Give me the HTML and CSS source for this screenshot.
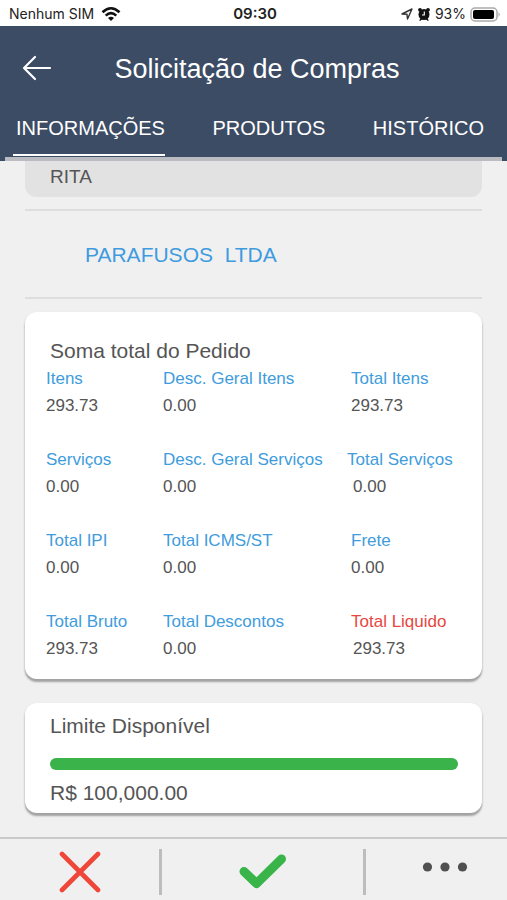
FILE: index.html
```html
<!DOCTYPE html>
<html lang="pt-BR">
<head>
<meta charset="utf-8">
<meta name="viewport" content="width=device-width, initial-scale=1">
<title>Solicitação de Compras</title>
<link rel="stylesheet" href="styles.css">
</head>
<body>
<div class="status">
  <div class="status-side">
    <span>Nenhum SIM</span>
    <svg width="20" height="16" viewBox="0 0 20 16" aria-hidden="true"><g fill="none" stroke="#111" stroke-width="2.6"><path d="M1.5 6.3Q10 -1.8 18.500 6.300"/><path d="M4.700 9.600Q10 4.600 15.300 9.600"/></g><path d="M7 12Q10 9.500 13 12L10 15Z" fill="#111"/></svg>
  </div>
  <strong class="clock">09:30</strong>
  <div class="status-side status-end">
    <svg width="12" height="12" viewBox="0 0 12 12" aria-hidden="true"><path d="M1 6 11 1 6.500 11 6 6.300Z" fill="none" stroke="#333" stroke-width="1.400" stroke-linejoin="round"/></svg>
    <svg width="14" height="14" viewBox="0 0 14 14" aria-hidden="true"><g fill="#111"><circle cx="7" cy="7.500" r="5.500"/><circle cx="3" cy="2.800" r="1.900"/><circle cx="11" cy="2.800" r="1.900"/><path d="M2 13.500 4 11h6l2 2.500-1.500.3L8.500 12h-3l-2 1.800Z"/></g><path d="M7.300 4.500V8H5" fill="none" stroke="#fff" stroke-width="1.100"/></svg>
    <span>93%</span>
    <svg width="31" height="15" viewBox="0 0 31 15" aria-hidden="true"><rect x="1" y="1" width="26" height="13" rx="4" fill="#fff" stroke="#aaa" stroke-width="1.500"/><rect x="3" y="3" width="21" height="9" rx="2" fill="#000"/><path d="M28.500 5Q31 7.500 28.500 10Z" fill="#aaa"/></svg>
  </div>
</div>

<header class="header">
  <div class="title-bar">
    <button class="back" type="button" aria-label="Voltar"><svg width="30" height="26" viewBox="0 0 30 26" aria-hidden="true"><path d="M28 13H2M13 2 2 13 13 24" fill="none" stroke="#fff" stroke-width="2.200" stroke-linecap="round" stroke-linejoin="round"/></svg></button>
    <h1>Solicitação de Compras</h1>
  </div>
  <nav class="tabs">
    <a class="tab active" href="#informacoes">INFORMAÇÕES</a>
    <a class="tab" href="#produtos">PRODUTOS</a>
    <a class="tab" href="#historico">HISTÓRICO</a>
  </nav>
</header>

<main class="content" id="informacoes">
  <div class="person">RITA</div>
  <div class="company"><a href="#empresa">PARAFUSOS&nbsp; LTDA</a></div>

  <section class="card totals">
    <h2>Soma total do Pedido</h2>
    <dl class="grid">
      <div><dt>Itens</dt><dd>293.73</dd></div>
      <div><dt>Desc. Geral Itens</dt><dd>0.00</dd></div>
      <div><dt>Total Itens</dt><dd>293.73</dd></div>
      <div><dt>Serviços</dt><dd>0.00</dd></div>
      <div><dt>Desc. Geral Serviços</dt><dd>0.00</dd></div>
      <div class="wide"><dt>Total Serviços</dt><dd>0.00</dd></div>
      <div><dt>Total IPI</dt><dd>0.00</dd></div>
      <div><dt>Total ICMS/ST</dt><dd>0.00</dd></div>
      <div><dt>Frete</dt><dd>0.00</dd></div>
      <div><dt>Total Bruto</dt><dd>293.73</dd></div>
      <div><dt>Total Descontos</dt><dd>0.00</dd></div>
      <div class="net"><dt>Total Liquido</dt><dd>293.73</dd></div>
    </dl>
  </section>

  <section class="card limit">
    <h2>Limite Disponível</h2>
    <div class="bar"></div>
    <p>R$ 100,000.00</p>
  </section>
</main>

<footer class="actions">
  <button type="button" aria-label="Recusar"><svg width="42" height="42" viewBox="0 0 42 42" aria-hidden="true"><path d="M3 3 39 39M39 3 3 39" fill="none" stroke="#ef4639" stroke-width="4.600" stroke-linecap="round"/></svg></button>
  <button type="button" aria-label="Aprovar"><svg width="48" height="36" viewBox="0 0 48 36" aria-hidden="true"><path d="M5 17.500 17.500 29.500 42.500 5" fill="none" stroke="#38b449" stroke-width="9" stroke-linecap="round" stroke-linejoin="round"/></svg></button>
  <button class="more" type="button" aria-label="Mais opções"><svg width="46" height="10" viewBox="0 0 46 10" aria-hidden="true"><g fill="#505050"><circle cx="5.500" cy="5" r="4.600"/><circle cx="23" cy="5" r="4.600"/><circle cx="40.500" cy="5" r="4.600"/></g></svg></button>
</footer>
</body>
</html>
```
FILE: styles.css
```css
* {
  box-sizing: border-box;
}

body {
  margin: 0;
  min-height: 100vh;
  display: flex;
  flex-direction: column;
  background: #f0f0f0;
  color: #555;
  font-family: "Liberation Sans", Arial, sans-serif;
}

h1, h2, p, dl, dd {
  margin: 0;
  font-weight: 400;
}

a {
  color: inherit;
  text-decoration: none;
}

button {
  padding: 0;
  border: 0;
  background: none;
  color: inherit;
  font: inherit;
}

svg {
  display: block;
}

.status {
  display: grid;
  grid-template-columns: 1fr auto 1fr;
  align-items: center;
  padding: 2px 6px 0 9px;
  background: #fff;
  color: #222;
  font: 14px/24px Inter, sans-serif;
}

.status-side {
  display: flex;
  align-items: center;
  gap: 7px;
}

.status-end {
  justify-content: flex-end;
  gap: 4px;
}

.clock {
  font-size: 15px;
  font-weight: 600;
}

.header {
  background: #3c4c65;
  color: #fff;
  border: solid #3c4c65;
  border-width: 0 5px;
}

.title-bar {
  display: grid;
  grid-template-columns: 64px 1fr 64px;
  align-items: center;
  height: 84px;
}

.back {
  padding-left: 17px;
}

h1 {
  padding: 2px 0 0 7px;
  text-align: center;
  font-size: 27px;
  line-height: 32px;
  white-space: nowrap;
}

.tabs {
  display: flex;
  justify-content: space-between;
  padding: 0 18px 0 8px;
  border-bottom: 4px solid #bbbcc1;
}

.tab {
  height: 47px;
  font-size: 20px;
  line-height: 36px;
}

.active {
  height: 46px;
  padding-left: 3px;
  border-bottom: 2px solid #fff;
}

.content {
  flex: 1;
  padding: 0 25px;
}

.person {
  height: 36px;
  padding: 0 25px;
  border-radius: 0 0 11px 11px;
  background: #e2e2e2;
  font-size: 19px;
  line-height: 32px;
}

.company {
  margin: 12px 0 13px;
  padding: 1px 0 0 60px;
  border: solid #dedede;
  border-width: 2px 0;
  color: #3e9bdf;
  font-size: 21px;
  line-height: 85px;
}

.card {
  border-radius: 12px;
  background: #fff;
  box-shadow: 0 3px 2px #a2a2a2, 0 1px 2px #ccc;
}

h2, .limit p {
  font-size: 21px;
  line-height: 24px;
}

.totals {
  padding: 27px 21px 17px;
}

.totals h2 {
  padding-left: 4px;
}

.grid {
  display: grid;
  grid-template-columns: 117fr 188fr 110fr;
  row-gap: 27px;
  margin-top: 2px;
  font-size: 17px;
  line-height: 27px;
  white-space: nowrap;
}

dt {
  color: #409cdd;
}

.wide dt {
  margin-left: -4px;
}

.wide dd, .net dd {
  padding-left: 2px;
}

.net dt {
  color: #e8473f;
}

.limit {
  margin-top: 24px;
  padding: 11px 24px 8px 25px;
}

.bar {
  height: 12px;
  margin: 20px 0 11px;
  border-radius: 6px;
  background: #3ab34a;
}

.actions {
  display: grid;
  grid-template-columns: 159fr 204fr 144fr;
  margin-top: 24px;
  padding: 10px 0 5px;
  border-top: 2px solid #c9c9c9;
}

.actions button {
  display: flex;
  align-items: center;
  justify-content: center;
  height: 46px;
}

.actions button + button {
  border-left: 3px solid #bdbdbd;
}

.actions .more {
  padding: 0 0 10px 16px;
}
```
